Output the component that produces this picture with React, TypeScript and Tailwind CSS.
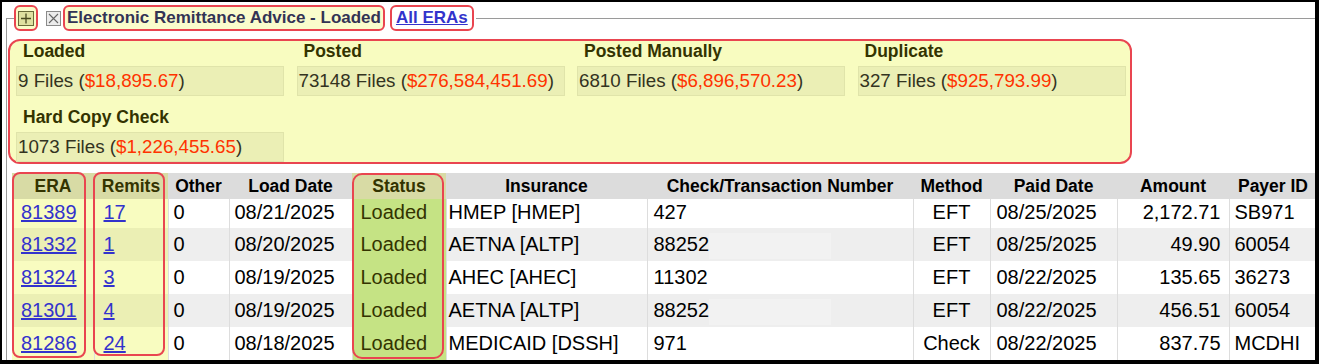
import React from "react";

type Row = {
  era: string;
  remits: string;
  other: string;
  loadDate: string;
  status: string;
  insurance: string;
  check: string;
  masked: boolean;
  method: string;
  paidDate: string;
  amount: string;
  payer: string;
};

const rows: Row[] = [
  { era: "81389", remits: "17", other: "0", loadDate: "08/21/2025", status: "Loaded", insurance: "HMEP [HMEP]", check: "427", masked: false, method: "EFT", paidDate: "08/25/2025", amount: "2,172.71", payer: "SB971" },
  { era: "81332", remits: "1", other: "0", loadDate: "08/20/2025", status: "Loaded", insurance: "AETNA [ALTP]", check: "88252", masked: true, method: "EFT", paidDate: "08/25/2025", amount: "49.90", payer: "60054" },
  { era: "81324", remits: "3", other: "0", loadDate: "08/19/2025", status: "Loaded", insurance: "AHEC [AHEC]", check: "11302", masked: false, method: "EFT", paidDate: "08/22/2025", amount: "135.65", payer: "36273" },
  { era: "81301", remits: "4", other: "0", loadDate: "08/19/2025", status: "Loaded", insurance: "AETNA [ALTP]", check: "88252", masked: true, method: "EFT", paidDate: "08/22/2025", amount: "456.51", payer: "60054" },
  { era: "81286", remits: "24", other: "0", loadDate: "08/18/2025", status: "Loaded", insurance: "MEDICAID [DSSH]", check: "971", masked: false, method: "Check", paidDate: "08/22/2025", amount: "837.75", payer: "MCDHI" },
];

const summary = [
  { label: "Loaded", files: "9", amount: "$18,895.67" },
  { label: "Posted", files: "73148", amount: "$276,584,451.69" },
  { label: "Posted Manually", files: "6810", amount: "$6,896,570.23" },
  { label: "Duplicate", files: "327", amount: "$925,793.99" },
  { label: "Hard Copy Check", files: "1073", amount: "$1,226,455.65" },
];

const SummaryCell = ({ label, files, amount }: { label: string; files: string; amount: string }) => (
  <div>
    <div className="h-[25px] pl-[7px] text-[17.5px] font-bold leading-[20px] text-[#333300]">
      {label}
    </div>
    <div className="h-[30px] border border-[#e0e4aa] bg-[#ebefb5] pl-[1px] text-[18.75px] leading-[28px] text-[#33331f]">
      {files} Files (<span className="text-[#ff3300]">{amount}</span>)
    </div>
  </div>
);

const App: React.FC = () => {
  return (
    <div className="h-[364px] w-[1319px] overflow-hidden border-t-2 border-r-4 border-b-4 border-l-2 border-black bg-white font-['Liberation_Sans',Arial,sans-serif]">
      <fieldset className="mt-[3px] ml-[4px] min-w-0 border-t border-l border-[#9a9a9a] pl-[1px]">
        <legend className="ml-[6px] flex h-[26px] items-center pr-[2px]">
          <span className="flex h-[26px] w-[24px] items-center justify-center rounded-[6px] border-2 border-[#e94550] bg-[#fafcc8]">
            <svg width="16" height="15" viewBox="0 0 16 15">
              <rect x="0.5" y="0.5" width="15" height="14" fill="#dfe0a0" stroke="#6b6b3a" />
              <path d="M8 2.5v10M3 7.5h10" stroke="#4a4a20" strokeWidth="1.3" />
            </svg>
          </span>
          <span className="ml-[8px] flex">
            <svg width="15" height="15" viewBox="0 0 15 15">
              <rect x="0.5" y="0.5" width="14" height="14" fill="#ececec" stroke="#8a8a8a" />
              <path d="M3 3l9 9M12 3l-9 9" stroke="#666" strokeWidth="1.1" />
            </svg>
          </span>
          <span className="ml-[2px] h-[26px] rounded-[6px] border-2 border-[#e94550] bg-[#fafccc] px-[2px] text-[17px] font-bold leading-[22px] text-[#333355]">
            Electronic Remittance Advice - Loaded
          </span>
          <span className="ml-[5px] h-[26px] rounded-[6px] border-2 border-[#e94550] bg-white px-[4px] text-[17px] font-bold leading-[22px] text-[#3333cc] underline">
            All ERAs
          </span>
        </legend>

        <div className="mt-[8px] grid h-[125px] w-[1124px] grid-cols-[repeat(4,268px)] content-start gap-x-[12.5px] gap-y-[11px] rounded-[12px] border-2 border-[#e94550] bg-[#f8fcc0] pl-[6px]">
          {summary.map((s) => (
            <SummaryCell key={s.label} {...s} />
          ))}
        </div>

        <div className="relative mt-[9px] ml-[4px] w-[1305px]">
          <table className="w-[1305px] table-fixed border-collapse text-black">
            <colgroup>
              <col className="w-[82px]" />
              <col className="w-[74px]" />
              <col className="w-[61px]" />
              <col className="w-[123px]" />
              <col className="w-[94px]" />
              <col className="w-[201px]" />
              <col className="w-[266px]" />
              <col className="w-[77px]" />
              <col className="w-[127px]" />
              <col className="w-[112px]" />
              <col className="w-[88px]" />
            </colgroup>
            <thead>
              <tr className="h-[26px] bg-[#dcdcdc] text-[17.5px] font-bold leading-[26px]">
                <th className="bg-[#d8dba5] p-0 text-[#333300]">ERA</th>
                <th className="bg-[#d8dba5] p-0 text-[#333300]">Remits</th>
                <th className="p-0">Other</th>
                <th className="p-0">Load Date</th>
                <th className="bg-[#d8dba5] p-0 text-[#333300]">Status</th>
                <th className="p-0">Insurance</th>
                <th className="p-0">Check/Transaction Number</th>
                <th className="p-0">Method</th>
                <th className="p-0">Paid Date</th>
                <th className="p-0">Amount</th>
                <th className="p-0">Payer ID</th>
              </tr>
            </thead>
            <tbody className="text-[20px]">
              {rows.map((r, i) => {
                const even = i % 2 === 1;
                const first = i === 0;
                const rowCls = first ? "h-[29px] leading-[26px]" : "h-[33px] leading-[33px]";
                const pad = first ? "pb-[3px]" : "";
                return (
                  <tr key={r.era} className={`${rowCls} ${even ? "bg-[#eeeeee]" : "bg-white"}`}>
                    <td className={`${pad} pl-[9px] ${even ? "bg-[#ebefb4]" : "bg-[#f8fcc0]"}`}>
                      <span className="text-[#3333cc] underline">{r.era}</span>
                    </td>
                    <td className={`${pad} border-l border-[#dddddd] pl-[9px] ${even ? "bg-[#ebefb4]" : "bg-[#f8fcc0]"}`}>
                      <span className="text-[#3333cc] underline">{r.remits}</span>
                    </td>
                    <td className={`${pad} border-l border-[#dddddd] pl-[5px]`}>{r.other}</td>
                    <td className={`${pad} border-l border-[#dddddd] pl-[5px]`}>{r.loadDate}</td>
                    <td className={`${pad} border-l border-[#dddddd] bg-[#c5e384] pl-[8px] text-[#333300]`}>{r.status}</td>
                    <td className={`${pad} border-l border-[#dddddd] pl-[2px] whitespace-nowrap`}>{r.insurance}</td>
                    <td className={`${pad} border-l border-[#dddddd] pl-[6px] whitespace-nowrap`}>
                      {r.check}
                      {r.masked && (
                        <span className="inline-block h-[26px] w-[122px] bg-[#f2f2f2] align-middle" />
                      )}
                    </td>
                    <td className={`${pad} border-l border-[#dddddd] text-center`}>{r.method}</td>
                    <td className={`${pad} border-l border-[#dddddd] pl-[6px]`}>{r.paidDate}</td>
                    <td className={`${pad} border-l border-[#dddddd] pr-[8px] text-right`}>{r.amount}</td>
                    <td className={`${pad} border-l border-[#dddddd] pl-[5px]`}>{r.payer}</td>
                  </tr>
                );
              })}
            </tbody>
          </table>

          {/* highlight outlines drawn over the table columns */}
          <div className="pointer-events-none absolute top-[-1px] left-0 h-[186px] w-[74px] rounded-[8px] border-2 border-[#e94550]" />
          <div className="pointer-events-none absolute top-[-1px] left-[81px] h-[184px] w-[72px] rounded-[8px] border-2 border-[#e94550]" />
          <div className="pointer-events-none absolute top-0 left-[340px] h-[186px] w-[92px] rounded-[10px] border-2 border-[#e94550]" />
        </div>
      </fieldset>
    </div>
  );
};

export default App;
